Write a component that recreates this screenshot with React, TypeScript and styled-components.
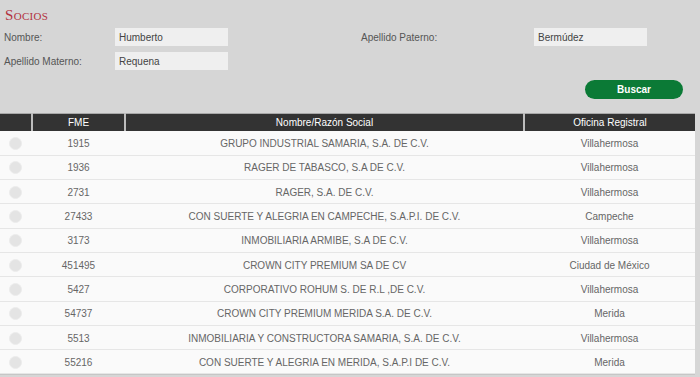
import styled, { createGlobalStyle } from 'styled-components'

const GlobalStyle = createGlobalStyle`
  html, body {
    margin: 0;
    padding: 0;
    background: #d6d6d6;
    font-family: "Liberation Sans", Arial, sans-serif;
  }
`

const Page = styled.main`
  width: 700px;
  min-height: 377px;
  background: #d6d6d6;
  overflow: hidden;
`

const Title = styled.h2`
  margin: 0;
  padding: 8px 0 0 5px;
  height: 20px;
  font-family: "Liberation Serif", "Times New Roman", serif;
  font-variant: small-caps;
  font-weight: normal;
  font-size: 15px;
  line-height: 14px;
  color: #b3323e;
  letter-spacing: 0.3px;
`

const Form = styled.div`
  display: grid;
  grid-template-columns: 111px 113px 133px 173px 113px;
  row-gap: 6px;
  padding: 0 0 0 4px;
  align-items: center;
`

const Label = styled.label`
  font-size: 10px;
  color: #555;
`

const Input = styled.input`
  box-sizing: border-box;
  width: 113px;
  height: 18px;
  border: none;
  outline: none;
  background: #efefef;
  padding: 0 4px;
  font-family: "Liberation Sans", Arial, sans-serif;
  font-size: 10px;
  color: #444;
`

const Actions = styled.div`
  display: flex;
  justify-content: flex-end;
  padding: 10px 17px 0 0;
  height: 43px;
  box-sizing: border-box;
`

const Button = styled.button`
  width: 98px;
  height: 19px;
  border: none;
  border-radius: 10px;
  background: #0b7a36;
  color: #fff;
  font-family: "Liberation Sans", Arial, sans-serif;
  font-size: 10px;
  font-weight: bold;
  cursor: pointer;
`

const Table = styled.table`
  width: 695px;
  border-collapse: collapse;
  table-layout: fixed;
  font-size: 10px;
  border-top: 1px solid #a8a8a8;
`

const Col = styled.col<{ w: number }>`
  width: ${({ w }) => w}px;
`

const Th = styled.th`
  height: 17px;
  padding: 0;
  background: #333;
  color: #fff;
  font-weight: normal;
  text-align: center;
  border-left: 2px solid #bdbdbd;
  &:first-child {
    border-left: none;
  }
`

const Tr = styled.tr`
  height: 24.3px;
  background: #fafafa;
  border-bottom: 1px solid #e6e6e6;
`

const Td = styled.td`
  padding: 1px 0 0;
  text-align: center;
  color: #666;
  white-space: nowrap;
`

const Radio = styled.span`
  display: block;
  width: 13px;
  height: 13px;
  margin-left: 9px;
  border-radius: 50%;
  background: #e4e4e4;
  border: 1px solid #ececec;
  box-sizing: border-box;
`

const Footer = styled.div`
  display: flex;
  width: 695px;
  padding: 2px 0 0 266px;
  height: 10px;
  box-sizing: border-box;
  border-top: 1px solid #c6c6c6;
`

const PageMark = styled.span`
  width: 12px;
  height: 8px;
  border-radius: 2px;
  background: #d1535d;
`

const rows = [
  ['1915', 'GRUPO INDUSTRIAL SAMARIA, S.A. DE C.V.', 'Villahermosa'],
  ['1936', 'RAGER DE TABASCO, S.A DE C.V.', 'Villahermosa'],
  ['2731', 'RAGER, S.A. DE C.V.', 'Villahermosa'],
  ['27433', 'CON SUERTE Y ALEGRIA EN CAMPECHE, S.A.P.I. DE C.V.', 'Campeche'],
  ['3173', 'INMOBILIARIA ARMIBE, S.A DE C.V.', 'Villahermosa'],
  ['451495', 'CROWN CITY PREMIUM SA DE CV', 'Ciudad de México'],
  ['5427', 'CORPORATIVO ROHUM S. DE R.L ,DE C.V.', 'Villahermosa'],
  ['54737', 'CROWN CITY PREMIUM MERIDA S.A. DE C.V.', 'Merida'],
  ['5513', 'INMOBILIARIA Y CONSTRUCTORA SAMARIA, S.A. DE C.V.', 'Villahermosa'],
  ['55216', 'CON SUERTE Y ALEGRIA EN MERIDA, S.A.P.I DE C.V.', 'Merida'],
]

function App() {
  return (
    <Page>
      <GlobalStyle />
      <Title>Socios</Title>
      <Form>
        <Label>Nombre:</Label>
        <Input defaultValue="Humberto" />
        <span />
        <Label>Apellido Paterno:</Label>
        <Input defaultValue="Bermúdez" />
        <Label>Apellido Materno:</Label>
        <Input defaultValue="Requena" />
      </Form>
      <Actions>
        <Button>Buscar</Button>
      </Actions>
      <Table>
        <colgroup>
          <Col w={32} />
          <Col w={93} />
          <Col w={399} />
          <Col w={171} />
        </colgroup>
        <thead>
          <tr>
            <Th />
            <Th>FME</Th>
            <Th>Nombre/Razón Social</Th>
            <Th>Oficina Registral</Th>
          </tr>
        </thead>
        <tbody>
          {rows.map(([fme, name, office]) => (
            <Tr key={fme}>
              <Td>
                <Radio />
              </Td>
              <Td>{fme}</Td>
              <Td>{name}</Td>
              <Td>{office}</Td>
            </Tr>
          ))}
        </tbody>
      </Table>
      <Footer>
        <PageMark />
      </Footer>
    </Page>
  )
}

export default App
